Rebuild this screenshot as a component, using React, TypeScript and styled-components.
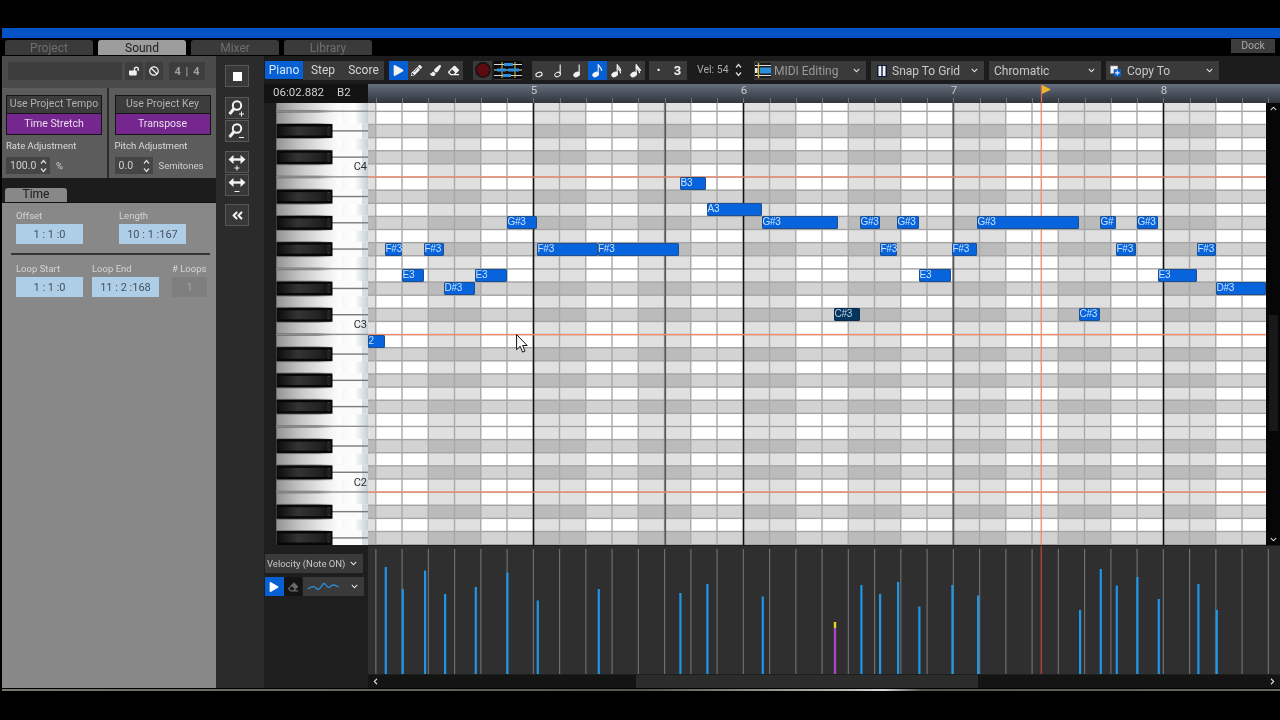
import { FC } from 'react';
import styled, { createGlobalStyle } from 'styled-components';
import {
  FaAngleDoubleLeft,
  FaBan,
  FaChevronDown,
  FaEraser,
  FaLockOpen,
  FaPaintBrush,
  FaPencilAlt,
  FaPlay,
} from 'react-icons/fa';

const ROW = 13.13;
const COL = 26.25;
const ROLL_W = 898;
const ROLL_H = 442;
const C4_LINE = 74; // y of the orange line below C4, inside the roll
const BLACK = [1, 3, 6, 8, 10];

const rowTop = (n: number) => C4_LINE + n * ROW;
const pitchClass = (n: number) => (((-n - 1) % 12) + 12) % 12;
const ROWS = Array.from({ length: 36 }, (_, i) => i - 6);
const COLS = Array.from({ length: 36 }, (_, i) => i);

interface INote {
  label: string;
  x: number;
  end: number;
  row: number;
  selected?: boolean;
}

const NOTES: INote[] = [
  { label: 'B3', x: 680, end: 706, row: 0 },
  { label: 'A3', x: 707, end: 762, row: 2 },
  { label: 'G#3', x: 507, end: 537, row: 3 },
  { label: 'G#3', x: 762, end: 838, row: 3 },
  { label: 'G#3', x: 860, end: 880, row: 3 },
  { label: 'G#3', x: 897, end: 919, row: 3 },
  { label: 'G#3', x: 977, end: 1079, row: 3 },
  { label: 'G#', x: 1100, end: 1116, row: 3 },
  { label: 'G#3', x: 1137, end: 1158, row: 3 },
  { label: 'F#3', x: 385, end: 402, row: 5 },
  { label: 'F#3', x: 424, end: 444, row: 5 },
  { label: 'F#3', x: 537, end: 597.5, row: 5 },
  { label: 'F#3', x: 597.5, end: 679, row: 5 },
  { label: 'F#3', x: 880, end: 897, row: 5 },
  { label: 'F#3', x: 952, end: 977, row: 5 },
  { label: 'F#3', x: 1116, end: 1136, row: 5 },
  { label: 'F#3', x: 1197, end: 1216, row: 5 },
  { label: 'E3', x: 402, end: 424, row: 7 },
  { label: 'E3', x: 475, end: 507, row: 7 },
  { label: 'E3', x: 919, end: 951, row: 7 },
  { label: 'E3', x: 1158, end: 1197, row: 7 },
  { label: 'D#3', x: 444, end: 475, row: 8 },
  { label: 'D#3', x: 1216, end: 1266, row: 8 },
  { label: 'C#3', x: 834, end: 860, row: 10, selected: true },
  { label: 'C#3', x: 1079, end: 1100, row: 10 },
  { label: '2', x: 368, end: 385, row: 12 },
];

const VELOCITIES: [number, number][] = [
  [385.7, 567], [402.7, 589], [425, 570.5], [445, 594], [475.7, 587], [507.3, 572.5], [537.7, 600.5],
  [598.7, 589], [680.3, 593], [707.3, 584], [762.7, 596.5], [861.3, 585], [880, 594], [898, 582],
  [919.3, 606.5], [952.3, 585], [978, 595.5], [1080, 610], [1100.7, 569], [1116.7, 585.5],
  [1137.3, 577], [1158.7, 599], [1198.3, 584], [1216.7, 610],
];

const GlobalStyle = createGlobalStyle`
  html, body {
    margin: 0;
    padding: 0;
    background: #000;
    overflow: hidden;
  }
  * { box-sizing: border-box; }
`;

const Screen = styled.div`
  width: 1280px;
  height: 720px;
  background: #000;
  padding-top: 28px;
  font-family: Roboto, 'Liberation Sans', sans-serif;
  overflow: hidden;
  filter: blur(0.35px);
`;

const BlueBar = styled.div`
  height: 10px;
  margin-left: 2px;
  background: #0453c4;
`;

const TabsRow = styled.div`
  height: 18px;
  display: flex;
  align-items: flex-start;
  gap: 5px;
  padding: 2px 5px 0 5px;
`;

const Tab = styled.div<{ $active?: boolean }>`
  width: 88px;
  height: 15px;
  line-height: 17px;
  text-align: center;
  font-size: 12px;
  overflow: hidden;
  border-radius: 3px 3px 0 0;
  background: ${(p) => (p.$active ? '#9c9c9c' : '#3a3a3a')};
  color: ${(p) => (p.$active ? '#1e1e1e' : '#6e6e6e')};
`;

const DockButton = styled.div`
  margin: -1px 0 0 auto;
  width: 44px;
  height: 14px;
  line-height: 14px;
  text-align: center;
  font-size: 10.5px;
  color: #a8a8a8;
  background: #3c3c3c;
`;

const Main = styled.div`
  height: 632px;
  margin-left: 2px;
  display: flex;
`;

const BottomEdge = styled.div`
  height: 2px;
  margin: 1px 0 0 2px;
  background: linear-gradient(90deg, #77776c, #55554c 50%, #b8b8b0 66%, #d8d8d8 69%, #55554c 72%, #66665c);
`;

/* left panel */

const LeftPanel = styled.div`
  width: 214px;
  display: flex;
  flex-direction: column;
  background: #888888;
`;

const ClipRow = styled.div`
  height: 32px;
  display: flex;
  align-items: flex-start;
  padding: 6px 0 0 6px;
  background: #4a4a4a;
`;

const NameInput = styled.div`
  width: 114px;
  height: 18px;
  background: #3d3d3d;
`;

const ClipButton = styled.div<{ $gap?: number }>`
  width: 18px;
  height: 18px;
  margin-left: ${(p) => p.$gap ?? 2}px;
  display: flex;
  align-items: center;
  justify-content: center;
  color: #f0f0f0;
  font-size: 10px;
  background: #3d3d3d;
`;

const TimeSig = styled.div`
  width: 36px;
  height: 18px;
  margin-left: 6px;
  display: flex;
  align-items: center;
  justify-content: space-around;
  padding: 0 3px;
  font-size: 11px;
  font-weight: 700;
  color: #a0a0a0;
  background: #3d3d3d;
`;

const CardsRow = styled.div`
  height: 90px;
  display: flex;
  gap: 2px;
  background: #2b2b2b;
`;

const Card = styled.div<{ $width: number; $pad: number }>`
  width: ${(p) => p.$width}px;
  padding: 7px 0 0 ${(p) => p.$pad}px;
  background: #5c5c5c;
`;

const ModeStack = styled.div`
  width: 96px;
  height: 40px;
  display: flex;
  flex-direction: column;
  border: 1px solid #141414;
`;

const ModeButton = styled.div<{ $on?: boolean }>`
  flex: 1;
  line-height: ${(p) => (p.$on ? 20 : 15)}px;
  text-align: center;
  font-size: 10.5px;
  white-space: nowrap;
  color: ${(p) => (p.$on ? '#e8dcec' : '#b0b0b0')};
  background: ${(p) => (p.$on ? '#76268f' : '#3c3c3c')};
  border-top: ${(p) => (p.$on ? '1px solid #141414' : '0')};
`;

const SmallLabel = styled.div`
  margin-top: 5px;
  height: 12px;
  line-height: 12px;
  font-size: 9.5px;
  color: #dcdcdc;
`;

const StepperRow = styled.div`
  margin-top: 5px;
  display: flex;
  align-items: center;
  gap: 6px;
  font-size: 9.5px;
  color: #cfcfcf;
`;

const Stepper = styled.div<{ $width: number }>`
  width: ${(p) => p.$width}px;
  height: 17px;
  display: flex;
  align-items: center;
  justify-content: space-between;
  padding: 0 3px 0 4px;
  font-size: 10.5px;
  color: #d0d0d0;
  background: #454545;
`;

const TabStrip = styled.div`
  height: 25px;
  padding: 10px 0 0 3px;
  background: #1c1c1c;
  border-bottom: 1px solid #111;
`;

const TimeTab = styled.div`
  width: 62px;
  height: 14px;
  line-height: 13px;
  text-align: center;
  font-size: 12px;
  color: #1a1a1a;
  background: #888888;
  border-radius: 3px 3px 0 0;
`;

const FieldsRow = styled.div<{ $top: number }>`
  display: flex;
  padding: ${(p) => p.$top}px 0 0 14px;
`;

const FieldWrap = styled.div<{ $width: number; $gap?: number }>`
  width: ${(p) => p.$width}px;
  margin-left: ${(p) => p.$gap ?? 0}px;
`;

const FieldLabel = styled.div`
  height: 14px;
  line-height: 12px;
  font-size: 9.5px;
  color: #d4d4d4;
  white-space: nowrap;
`;

const Field = styled.div<{ $muted?: boolean }>`
  height: 20px;
  line-height: 21px;
  text-align: center;
  font-size: 11px;
  color: ${(p) => (p.$muted ? '#a0a0a0' : '#46535e')};
  background: ${(p) => (p.$muted ? '#7f7f7f' : '#aecde6')};
`;

const Divider = styled.div`
  height: 2px;
  margin: 9px 6px 0 9px;
  background: #353535;
`;

/* tool column */

const ToolColumn = styled.div`
  width: 48px;
  padding: 9px 0 0 9px;
  display: flex;
  flex-direction: column;
  background: #2b2b2b;
`;

const ToolButton = styled.div<{ $gap: number }>`
  width: 24px;
  height: 22px;
  margin-top: ${(p) => p.$gap}px;
  display: flex;
  align-items: center;
  justify-content: center;
  color: #f2f2f2;
  font-size: 13px;
  background: #383838;
  border: 1px solid #575757;
`;

const StopSquare = styled.div`
  width: 9px;
  height: 9px;
  background: #fff;
`;

/* editor */

const Editor = styled.div`
  width: 1016px;
  display: flex;
  flex-direction: column;
  background: #1c1c1c;
`;

const Toolbar = styled.div`
  height: 28px;
  padding: 5px 0 0 1px;
  display: flex;
  align-items: flex-start;
  background: #1c1c1c;
`;

const ToolGroup = styled.div<{ $width: number; $gap?: number }>`
  width: ${(p) => p.$width}px;
  height: 18.5px;
  margin-left: ${(p) => p.$gap ?? 0}px;
  display: flex;
  align-items: stretch;
  background: #3a3a3a;
`;

const TextTool = styled.div<{ $width: number; $on?: boolean }>`
  width: ${(p) => p.$width}px;
  line-height: 18px;
  text-align: center;
  font-size: 12px;
  color: ${(p) => (p.$on ? '#d7e8ff' : '#d2d2d2')};
  background: ${(p) => (p.$on ? '#075fd4' : 'transparent')};
`;

const IconTool = styled.div<{ $on?: boolean }>`
  flex: 1;
  display: flex;
  align-items: center;
  justify-content: center;
  font-size: 11px;
  color: #f2f2f2;
  background: ${(p) => (p.$on ? '#075fd4' : 'transparent')};
`;

const BoldThree = styled.span`
  font-size: 13px;
  font-weight: 700;
`;

const VelText = styled.div`
  width: 33px;
  margin-left: 10px;
  line-height: 18px;
  font-size: 10.5px;
  white-space: nowrap;
  color: #a9a9a9;
`;

const VelSpinner = styled.div`
  width: 17px;
  height: 18px;
  display: flex;
  align-items: center;
  justify-content: center;
`;

const Dropdown = styled.div<{ $width: number; $gap: number; $pad: number; $iconGap: number }>`
  width: ${(p) => p.$width}px;
  height: 19px;
  margin-left: ${(p) => p.$gap}px;
  padding: 0 6px 0 ${(p) => p.$pad}px;
  display: flex;
  align-items: center;
  gap: ${(p) => p.$iconGap}px;
  font-size: 12px;
  white-space: nowrap;
  color: #c8c8c8;
  background: #3a3a3a;
`;

const DropLabel = styled.span<{ $dim?: boolean }>`
  flex: 1;
  color: ${(p) => (p.$dim ? '#9a9a9a' : '#c8c8c8')};
`;

const Chevron = styled(FaChevronDown)`
  font-size: 7px;
  color: #e4e4e4;
`;

const RulerRow = styled.div`
  height: 19px;
  display: flex;
`;

const Clock = styled.div`
  width: 104px;
  padding-left: 9px;
  display: flex;
  gap: 13px;
  line-height: 17px;
  font-size: 11.5px;
  color: #cfcfcf;
  background: #131313;
`;

const Ruler = styled.div`
  position: relative;
  width: 912px;
  background: linear-gradient(180deg, #66707d 0%, #4a515c 50%, #30353d 100%);
`;

const RulerTick = styled.div`
  position: absolute;
  bottom: 0;
  width: 1px;
  height: 5px;
  background: #6c727a;
`;

const BarNumber = styled.div`
  position: absolute;
  top: 0;
  width: 16px;
  margin-left: -8px;
  text-align: center;
  line-height: 13px;
  font-size: 11.5px;
  color: #c4c8cc;
`;

const FlagMark = styled.svg`
  position: absolute;
  left: 672px;
  top: 0;
`;

const RollRow = styled.div`
  height: 442px;
  display: flex;
`;

const KeysGutter = styled.div`
  width: 12px;
  background: #1e1e1e;
`;

const Keys = styled.div`
  position: relative;
  width: 92px;
`;

const KeysArt = styled.svg`
  display: block;
`;

const OctaveLabel = styled.div`
  position: absolute;
  right: 1px;
  line-height: 14px;
  font-size: 11px;
  color: #2c2c2c;
`;

const Roll = styled.div`
  position: relative;
  width: ${ROLL_W}px;
  overflow: hidden;
`;

const RollArt = styled.svg`
  display: block;
`;

const Note = styled.div<{ $selected?: boolean }>`
  position: absolute;
  height: 13px;
  padding-left: 0.5px;
  line-height: 12px;
  font-family: 'Liberation Sans', Arial, sans-serif;
  font-size: 10px;
  letter-spacing: -0.25px;
  white-space: nowrap;
  overflow: hidden;
  color: ${(p) => (p.$selected ? '#b9d4e8' : '#c9e2ff')};
  background: ${(p) => (p.$selected ? '#06365e' : '#0764dc')};
  box-shadow: inset 0 0 0 1px ${(p) => (p.$selected ? '#0a2b48' : '#1a4f90')};
  border-radius: 2px;
`;

const Pointer = styled.svg`
  position: absolute;
  left: 148px;
  top: 231px;
`;

const VScroll = styled.div`
  position: relative;
  width: 14px;
  display: flex;
  flex-direction: column;
  justify-content: space-between;
  align-items: center;
  padding: 2px 0;
  background: #060606;
  color: #d8d8d8;
  font-size: 7px;
`;

const VThumb = styled.div`
  position: absolute;
  left: 3px;
  top: 212px;
  width: 9px;
  height: 116px;
  background: #181818;
`;

const UpChevron = styled(FaChevronDown)`
  transform: rotate(180deg);
`;

const VelocityRow = styled.div`
  height: 128px;
  margin-top: 1px;
  display: flex;
`;

const LaneControls = styled.div`
  width: 104px;
  padding: 8px 0 0 1px;
  display: flex;
  flex-direction: column;
  gap: 4px;
  background: #1e1e1e;
`;

const LaneDropdown = styled.div`
  width: 98px;
  height: 19px;
  padding: 0 6px 0 2px;
  display: flex;
  align-items: center;
  justify-content: space-between;
  font-size: 9.5px;
  white-space: nowrap;
  color: #c8c8c8;
  background: #3a3a3a;
`;

const LaneTools = styled.div`
  display: flex;
  height: 19px;
`;

const LaneTool = styled.div<{ $on?: boolean }>`
  width: 18.5px;
  display: flex;
  align-items: center;
  justify-content: center;
  font-size: 10px;
  color: ${(p) => (p.$on ? '#fff' : '#6a6a6a')};
  background: ${(p) => (p.$on ? '#075fd4' : '#141414')};
`;

const CurveSelect = styled.div`
  width: 61px;
  margin-left: 0.5px;
  padding: 0 6px 0 4px;
  display: flex;
  align-items: center;
  justify-content: space-between;
  background: #3a3a3a;
`;

const VelocityArt = styled.svg`
  display: block;
  background: #2f2f2f;
`;

const HScrollRow = styled.div`
  height: 14px;
  display: flex;
  background: #1e1e1e;
`;

const HScroll = styled.div`
  position: relative;
  width: 912px;
  margin-top: 1px;
  height: 13px;
  display: flex;
  align-items: center;
  justify-content: space-between;
  padding: 0 4px;
  color: #e0e0e0;
  font-size: 7px;
  background: #141414;
`;

const HThumb = styled.div`
  position: absolute;
  left: 268px;
  top: 0;
  width: 342px;
  height: 100%;
  background: #2c2c2c;
`;

const LeftArrow = styled(FaChevronDown)`
  transform: rotate(90deg);
`;

const RightArrow = styled(FaChevronDown)`
  transform: rotate(-90deg);
`;

/* drawings */

const NoteIcon: FC<{ kind: number }> = ({ kind }) => (
  <svg width="14" height="15" viewBox="0 0 14 15" fill="#f2f2f2" stroke="#f2f2f2">
    {kind === 0 ? (
      <ellipse cx="5" cy="11.5" rx="3.2" ry="2.1" fill="none" strokeWidth="1.1" transform="rotate(-20 5 11.5)" />
    ) : (
      <ellipse
        cx="4.6"
        cy="11.5"
        rx="2.9"
        ry="2.1"
        fill={kind === 1 ? 'none' : '#f2f2f2'}
        strokeWidth="1"
        transform="rotate(-25 4.6 11.5)"
      />
    )}
    {kind > 0 && <path d="M7.2 11V1.5" strokeWidth="1.1" fill="none" />}
    {kind > 2 && <path d="M7.2 1.5c.6 2.4 3.6 3 3.4 6.4" strokeWidth="1.3" fill="none" />}
    {kind > 3 && <path d="M7.2 4.2c.6 2.2 3.6 2.8 3.4 6" strokeWidth="1.3" fill="none" />}
    {kind > 4 && <path d="M7.2 2.8c.6 2.2 4.6 2.4 4.4 5.2" strokeWidth="1.2" fill="none" />}
  </svg>
);

const PianoRollIcon: FC = () => (
  <svg width="28" height="18" viewBox="0 0 28 18">
    <rect width="28" height="18" fill="#0c0c0c" />
    <path d="M0 3.5h28M0 9h28M0 14.5h28" stroke="#d8d8d8" strokeWidth="1" />
    <path d="M8 1v16M21 1v16" stroke="#e2c040" strokeWidth="1" />
    <rect x="10" y="2" width="9" height="3" fill="#2a8fd8" />
    <rect x="3" y="7.5" width="9" height="3" fill="#2a8fd8" />
    <rect x="14" y="7.5" width="11" height="3" fill="#2a8fd8" />
    <rect x="9" y="13" width="8" height="3" fill="#2a8fd8" />
  </svg>
);

const MidiEditIcon: FC = () => (
  <svg width="16" height="15" viewBox="0 0 16 15">
    <rect width="16" height="15" fill="#1a1a1a" />
    <path d="M0 2.5h16M0 12.5h16" stroke="#ddd" />
    <path d="M3.5 0v15" stroke="#e2c040" strokeWidth="1.4" />
    <rect x="0" y="5" width="2.5" height="5" fill="#e8e8e8" />
    <rect x="5" y="4.5" width="11" height="6" fill="#2a8fd8" />
  </svg>
);

const SnapIcon: FC = () => (
  <svg width="10" height="12" viewBox="0 0 10 12">
    <rect width="10" height="12" fill="#0c1c40" />
    <rect x="1.5" y="1" width="2.8" height="10" fill="#f2f2f2" />
    <rect x="5.7" y="1" width="2.8" height="10" fill="#f2f2f2" />
  </svg>
);

const CopyIcon: FC = () => (
  <svg width="11" height="12" viewBox="0 0 12 12">
    <rect x="0.5" y="0.5" width="8" height="8" fill="#f4f4f4" stroke="#999" strokeWidth="0.6" />
    <rect x="4" y="4" width="8" height="8" fill="#0a5fd4" />
    <path d="M8 5.5v5M5.5 8h5" stroke="#dfeaff" strokeWidth="1.3" />
  </svg>
);

const RecordIcon: FC = () => (
  <svg width="16" height="16" viewBox="0 0 16 16">
    <circle cx="8" cy="8" r="7.2" fill="#5b0b10" stroke="#111" strokeWidth="1.4" />
  </svg>
);

const SpinnerIcon: FC = () => (
  <svg width="7" height="14" viewBox="0 0 7 14" fill="none" stroke="#dcdcdc" strokeWidth="1.2">
    <path d="M1 4.5l2.5-3 2.5 3M1 9.5l2.5 3 2.5-3" />
  </svg>
);

const ZoomIcon: FC<{ plus?: boolean }> = ({ plus }) => (
  <svg width="20" height="18" viewBox="0 0 20 18" fill="none" stroke="#f4f4f4">
    <circle cx="10" cy="6.5" r="4.2" strokeWidth="2" />
    <path d="M7 9.8L2.5 15" strokeWidth="3" />
    <path d={plus ? 'M12 15h5M14.5 12.5v5' : 'M12 15.5h5'} strokeWidth="1" />
  </svg>
);

const StretchIcon: FC<{ plus?: boolean }> = ({ plus }) => (
  <svg width="20" height="18" viewBox="0 0 20 18" fill="#f4f4f4" stroke="#f4f4f4">
    <path d="M5 6.5h10" strokeWidth="2.4" />
    <path d="M6.5 2L1.5 6.5l5 4.5zM13.5 2l5 4.5-5 4.5z" stroke="none" />
    <path d={plus ? 'M7.5 15h5M10 12.5v5' : 'M7.5 15.5h5'} strokeWidth="1" fill="none" />
  </svg>
);

const KeysDrawing: FC = () => {
  const y0 = (n: number) => rowTop(n);
  return (
    <KeysArt width="92" height={ROLL_H} viewBox={`0 0 92 ${ROLL_H}`}>
      <defs>
        <linearGradient id="whiteKey" x1="0" x2="1" y1="0" y2="0">
          <stop offset="0" stopColor="#6e6e6e" />
          <stop offset="0.45" stopColor="#8e8e8e" />
          <stop offset="0.62" stopColor="#f2f2f2" />
          <stop offset="0.85" stopColor="#ffffff" />
          <stop offset="1" stopColor="#c6d0d4" />
        </linearGradient>
        <linearGradient id="strip" x1="0" x2="1" y1="0" y2="0">
          <stop offset="0" stopColor="#949494" />
          <stop offset="0.35" stopColor="#c4c4c4" />
          <stop offset="0.75" stopColor="#ececec" />
          <stop offset="1" stopColor="#ffffff" />
        </linearGradient>
        <linearGradient id="blackKey" x1="0" x2="1" y1="0" y2="0">
          <stop offset="0" stopColor="#0c0c0c" />
          <stop offset="0.4" stopColor="#343434" />
          <stop offset="0.8" stopColor="#222222" />
          <stop offset="1" stopColor="#101010" />
        </linearGradient>
      </defs>
      <rect width="92" height={ROLL_H} fill="url(#whiteKey)" />
      {ROWS.map((n) => {
        const pc = pitchClass(n);
        if (BLACK.includes(pc)) return null;
        return <rect key={n} x="1" y={y0(n) + 1.4} width="64" height="10.3" fill="url(#strip)" />;
      })}
      {ROWS.map((n) => {
        const pc = pitchClass(n);
        if (pc !== 0 && pc !== 5) return null;
        return <rect key={n} x="0" y={y0(n) + ROW - 0.8} width="92" height="1.3" fill="#8c8c8c" />;
      })}
      {ROWS.map((n) => {
        const pc = pitchClass(n);
        if (!BLACK.includes(pc)) return null;
        const y = y0(n);
        return (
          <g key={n}>
            <rect x="55" y={y - 1} width="37" height={ROW + 2} fill="#fbfbfb" />
            <rect x="86" y={y - 1} width="6" height={ROW + 2} fill="#d6dde0" />
            <rect x="55" y={y + 5.7} width="37" height="1.4" fill="#7a7a7a" />
            <rect x="0.5" y={y - 0.5} width="56" height="14" fill="#070707" />
            <rect x="1" y={y + 2} width="53" height="9" fill="url(#blackKey)" />
            <rect x="52" y={y + 2.5} width="2" height="8" fill="none" stroke="#555" strokeWidth="0.5" />
          </g>
        );
      })}
    </KeysArt>
  );
};

const RollDrawing: FC = () => (
  <RollArt width={ROLL_W} height={ROLL_H} viewBox={`0 0 ${ROLL_W} ${ROLL_H}`}>
    {ROWS.map((n) => {
      const dark = BLACK.includes(pitchClass(n));
      return (
        <g key={n}>
          <rect x="0" y={rowTop(n)} width={ROLL_W} height={ROW} fill={dark ? '#d3d3d3' : '#ffffff'} />
          {COLS.filter((c) => c % 2 === 0).map((c) => (
            <rect
              key={c}
              x={7.75 - 2 * COL + c * 2 * COL}
              y={rowTop(n)}
              width={2 * COL}
              height={ROW}
              fill={dark ? '#bbbbbb' : '#e0e0e0'}
            />
          ))}
        </g>
      );
    })}
    {ROWS.map((n) => (
      <rect key={n} x="0" y={rowTop(n) - 0.7} width={ROLL_W} height="1.4" fill="#a4a4a4" />
    ))}
    {COLS.map((c) => (
      <rect key={c} x={7.75 + c * COL - 0.7} y="0" width="1.4" height={ROLL_H} fill="#a8a8a8" />
    ))}
    {[165.3, 375.3, 795.3].map((x) => (
      <rect key={x} x={x - 0.5} y="0" width="1.5" height={ROLL_H} fill="#111" />
    ))}
    <rect x="296.5" y="0" width="1.6" height={ROLL_H} fill="#555" />
    <rect x="584.5" y="0" width="1.8" height={ROLL_H} fill="#555" />
    {[0, 12, 24].map((n) => (
      <rect key={n} x="0" y={rowTop(n) - 0.6} width={ROLL_W} height="1.3" fill="#f28a6c" />
    ))}
    <rect x="672.6" y="0" width="1.3" height={ROLL_H} fill="#f28a6c" />
  </RollArt>
);

const VelocityDrawing: FC = () => (
  <VelocityArt width="912" height="128" viewBox="0 0 912 128">
    {COLS.map((c) => (
      <rect key={c} x={7.75 + c * COL - 0.5} y="3" width="1.2" height="125" fill="#6e6e6e" />
    ))}
    <rect x="672.6" y="0" width="1.3" height="128" fill="#b8483a" />
    {VELOCITIES.map(([x, top]) => (
      <rect key={x} x={x - 368 - 1} y={top - 546} width="2.2" height={674 - top} fill="#1f96e6" />
    ))}
    <rect x="465.8" y="76" width="2.4" height="6" fill="#e8d820" />
    <rect x="465.8" y="82" width="2.4" height="46" fill="#a845c8" />
  </VelocityArt>
);

const App: FC = () => (
  <>
    <GlobalStyle />
    <Screen>
      <BlueBar />
      <TabsRow>
        <Tab>Project</Tab>
        <Tab $active>Sound</Tab>
        <Tab>Mixer</Tab>
        <Tab>Library</Tab>
        <DockButton>Dock</DockButton>
      </TabsRow>
      <Main>
        <LeftPanel>
          <ClipRow>
            <NameInput />
            <ClipButton $gap={3}>
              <FaLockOpen />
            </ClipButton>
            <ClipButton>
              <FaBan />
            </ClipButton>
            <TimeSig>
              <span>4</span>
              <span>|</span>
              <span>4</span>
            </TimeSig>
          </ClipRow>
          <CardsRow>
            <Card $width={105} $pad={4}>
              <ModeStack>
                <ModeButton>Use Project Tempo</ModeButton>
                <ModeButton $on>Time Stretch</ModeButton>
              </ModeStack>
              <SmallLabel>Rate Adjustment</SmallLabel>
              <StepperRow>
                <Stepper $width={44}>
                  100.0 <SpinnerIcon />
                </Stepper>
                %
              </StepperRow>
            </Card>
            <Card $width={107} $pad={5.5}>
              <ModeStack>
                <ModeButton>Use Project Key</ModeButton>
                <ModeButton $on>Transpose</ModeButton>
              </ModeStack>
              <SmallLabel>Pitch Adjustment</SmallLabel>
              <StepperRow>
                <Stepper $width={38}>
                  0.0 <SpinnerIcon />
                </Stepper>
                Semitones
              </StepperRow>
            </Card>
          </CardsRow>
          <TabStrip>
            <TimeTab>Time</TimeTab>
          </TabStrip>
          <FieldsRow $top={7}>
            <FieldWrap $width={67}>
              <FieldLabel>Offset</FieldLabel>
              <Field>1 : 1 :0</Field>
            </FieldWrap>
            <FieldWrap $width={67} $gap={36}>
              <FieldLabel>Length</FieldLabel>
              <Field>10 : 1 :167</Field>
            </FieldWrap>
          </FieldsRow>
          <Divider />
          <FieldsRow $top={8}>
            <FieldWrap $width={67}>
              <FieldLabel>Loop Start</FieldLabel>
              <Field>1 : 1 :0</Field>
            </FieldWrap>
            <FieldWrap $width={67} $gap={9}>
              <FieldLabel>Loop End</FieldLabel>
              <Field>11 : 2 :168</Field>
            </FieldWrap>
            <FieldWrap $width={35} $gap={13}>
              <FieldLabel># Loops</FieldLabel>
              <Field $muted>1</Field>
            </FieldWrap>
          </FieldsRow>
        </LeftPanel>

        <ToolColumn>
          <ToolButton $gap={0}>
            <StopSquare />
          </ToolButton>
          <ToolButton $gap={10}>
            <ZoomIcon plus />
          </ToolButton>
          <ToolButton $gap={1}>
            <ZoomIcon />
          </ToolButton>
          <ToolButton $gap={9}>
            <StretchIcon plus />
          </ToolButton>
          <ToolButton $gap={1}>
            <StretchIcon />
          </ToolButton>
          <ToolButton $gap={8}>
            <FaAngleDoubleLeft />
          </ToolButton>
        </ToolColumn>

        <Editor>
          <Toolbar>
            <TextTool $width={38} $on>
              Piano
            </TextTool>
            <ToolGroup $width={81}>
              <TextTool $width={40}>Step</TextTool>
              <TextTool $width={41}>Score</TextTool>
            </ToolGroup>
            <ToolGroup $width={74} $gap={5}>
              <IconTool $on>
                <FaPlay />
              </IconTool>
              <IconTool>
                <FaPencilAlt />
              </IconTool>
              <IconTool>
                <FaPaintBrush />
              </IconTool>
              <IconTool>
                <FaEraser />
              </IconTool>
            </ToolGroup>
            <ToolGroup $width={19} $gap={10}>
              <IconTool>
                <RecordIcon />
              </IconTool>
            </ToolGroup>
            <ToolGroup $width={28} $gap={2}>
              <IconTool>
                <PianoRollIcon />
              </IconTool>
            </ToolGroup>
            <ToolGroup $width={113} $gap={10}>
              {[0, 1, 2, 3, 4, 5].map((k) => (
                <IconTool key={k} $on={k === 3}>
                  <NoteIcon kind={k} />
                </IconTool>
              ))}
            </ToolGroup>
            <ToolGroup $width={38} $gap={4}>
              <IconTool>•</IconTool>
              <IconTool>
                <BoldThree>3</BoldThree>
              </IconTool>
            </ToolGroup>
            <VelText>Vel: 54</VelText>
            <VelSpinner>
              <SpinnerIcon />
            </VelSpinner>
            <Dropdown $width={112} $gap={7} $pad={1} $iconGap={3}>
              <MidiEditIcon />
              <DropLabel $dim>MIDI Editing</DropLabel>
              <Chevron />
            </Dropdown>
            <Dropdown $width={113} $gap={5} $pad={6} $iconGap={5}>
              <SnapIcon />
              <DropLabel>Snap To Grid</DropLabel>
              <Chevron />
            </Dropdown>
            <Dropdown $width={112} $gap={5} $pad={5} $iconGap={5}>
              <DropLabel>Chromatic</DropLabel>
              <Chevron />
            </Dropdown>
            <Dropdown $width={113} $gap={5} $pad={4} $iconGap={6}>
              <CopyIcon />
              <DropLabel>Copy To</DropLabel>
              <Chevron />
            </Dropdown>
          </Toolbar>

          <RulerRow>
            <Clock>
              <span>06:02.882</span>
              <span>B2</span>
            </Clock>
            <Ruler>
              {COLS.map((c) => (
                <RulerTick key={c} style={{ left: 7.75 + c * COL }} />
              ))}
              {[
                ['5', 166],
                ['6', 376],
                ['7', 586],
                ['8', 796],
              ].map(([label, x]) => (
                <BarNumber key={label} style={{ left: x as number }}>
                  {label}
                </BarNumber>
              ))}
              <FlagMark width="12" height="19" viewBox="0 0 12 19">
                <path d="M1.5 0.5v18" stroke="#d8705a" strokeWidth="1.3" />
                <path d="M2 1l9 4.5-9 4.5z" fill="#f0b428" />
              </FlagMark>
            </Ruler>
          </RulerRow>

          <RollRow>
            <KeysGutter />
            <Keys>
              <KeysDrawing />
              <OctaveLabel style={{ top: 57 }}>C4</OctaveLabel>
              <OctaveLabel style={{ top: 215 }}>C3</OctaveLabel>
              <OctaveLabel style={{ top: 373 }}>C2</OctaveLabel>
            </Keys>
            <Roll>
              <RollDrawing />
              {NOTES.map((n) => (
                <Note
                  key={`${n.label}-${n.x}`}
                  $selected={n.selected}
                  style={{ left: n.x - 368, width: n.end - n.x, top: rowTop(n.row) }}
                >
                  {n.label}
                </Note>
              ))}
              <Pointer width="12" height="19" viewBox="0 0 12 19">
                <path d="M.6.6v15l3.6-3.3 2.4 5.8 2.4-1-2.4-5.6h4.6z" fill="#fff" stroke="#111" strokeWidth="1" />
              </Pointer>
            </Roll>
            <VScroll>
              <UpChevron />
              <VThumb />
              <FaChevronDown />
            </VScroll>
          </RollRow>

          <VelocityRow>
            <LaneControls>
              <LaneDropdown>
                Velocity (Note ON)
                <Chevron />
              </LaneDropdown>
              <LaneTools>
                <LaneTool $on>
                  <FaPlay />
                </LaneTool>
                <LaneTool>
                  <FaEraser />
                </LaneTool>
                <CurveSelect>
                  <svg width="34" height="12" viewBox="0 0 34 12">
                    <path
                      d="M1 8c3-3 6-3 8-1s3 2 5-1 3-5 5-2 3 3 5 1 4-1 8 1"
                      fill="none"
                      stroke="#2c8ed6"
                      strokeWidth="1.3"
                    />
                  </svg>
                  <Chevron />
                </CurveSelect>
              </LaneTools>
            </LaneControls>
            <VelocityDrawing />
          </VelocityRow>

          <HScrollRow>
            <KeysGutter />
            <Keys />
            <HScroll>
              <LeftArrow />
              <HThumb />
              <RightArrow />
            </HScroll>
          </HScrollRow>
        </Editor>
      </Main>
      <BottomEdge />
    </Screen>
  </>
);

export default App;
